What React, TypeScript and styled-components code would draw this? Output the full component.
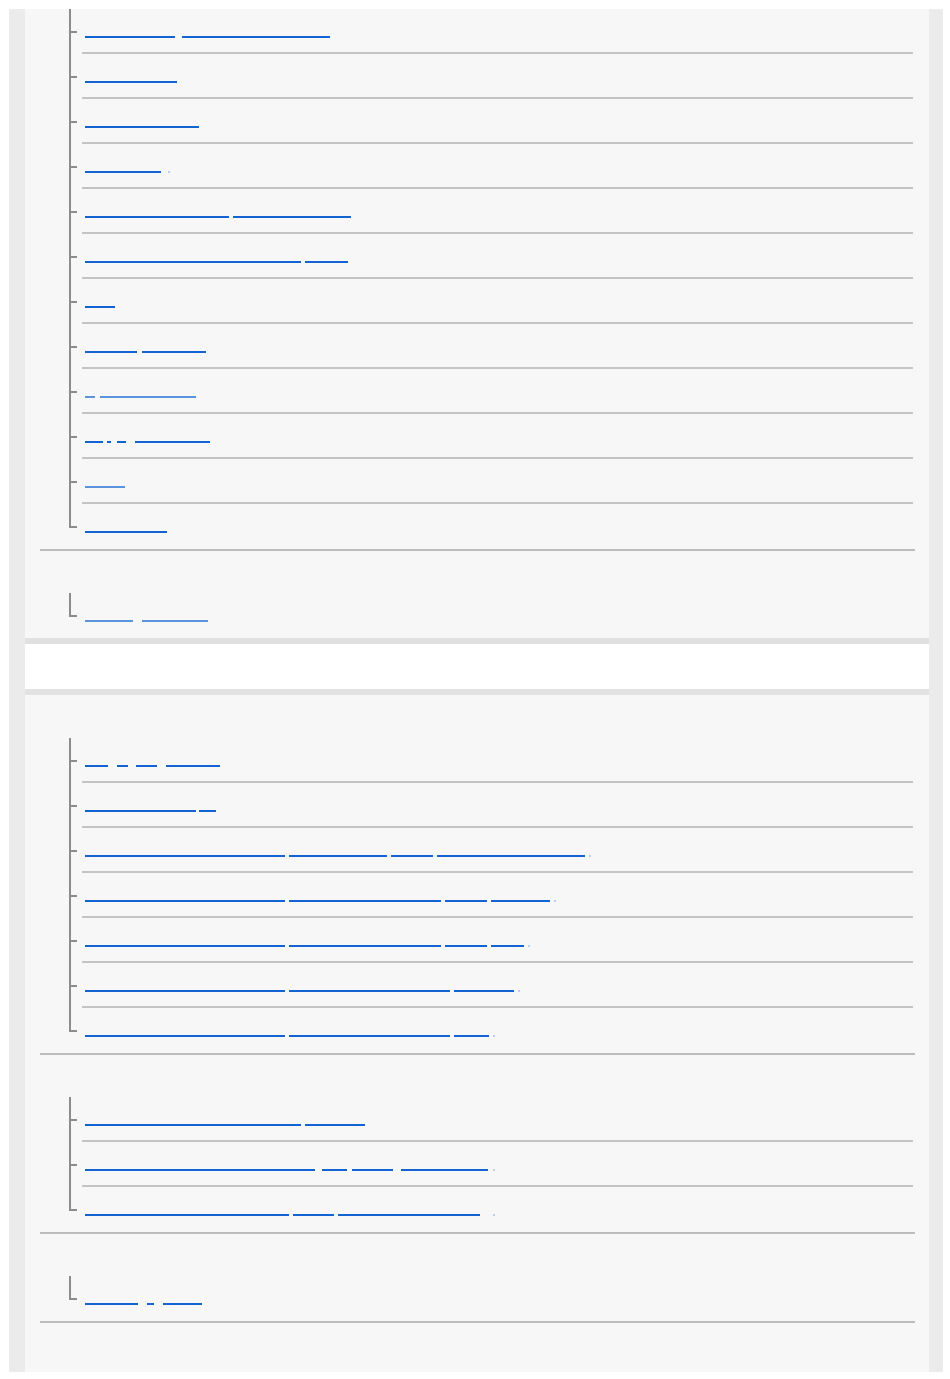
import styled, { createGlobalStyle } from "styled-components";

type Seg = [number, number];
type Row = { segs: Seg[]; dot?: number; light?: boolean };
type Group = { rows: Row[]; flush?: boolean; last?: boolean };

const LINK_X = 85;

const topPanel: Group[] = [
    {
        flush: true,
        rows: [
            { segs: [[85, 175], [182, 330]] },
            { segs: [[85, 177]] },
            { segs: [[85, 199]] },
            { segs: [[85, 161]], dot: 168 },
            { segs: [[85, 229], [233, 351]] },
            { segs: [[85, 301], [305, 348]] },
            { segs: [[85, 115]] },
            { segs: [[85, 137], [142, 206]] },
            { segs: [[85, 95], [100, 196]], light: true },
            { segs: [[85, 103], [107, 111], [117, 126], [135, 210]] },
            { segs: [[85, 125]], light: true },
            { segs: [[85, 167]] },
        ],
    },
    {
        last: true,
        rows: [{ segs: [[85, 133], [142, 208]], light: true }],
    },
];

const bottomPanel: Group[] = [
    {
        rows: [
            { segs: [[85, 108], [117, 128], [136, 157], [166, 220]] },
            { segs: [[85, 196], [199, 216]] },
            { segs: [[85, 285], [289, 387], [391, 433], [437, 585]], dot: 589 },
            { segs: [[85, 285], [289, 441], [445, 487], [491, 550]], dot: 554 },
            { segs: [[85, 285], [289, 441], [445, 487], [491, 524]], dot: 528 },
            { segs: [[85, 285], [289, 450], [454, 514]], dot: 518 },
            { segs: [[85, 285], [289, 450], [454, 489]], dot: 493 },
        ],
    },
    {
        rows: [
            { segs: [[85, 301], [305, 365]] },
            { segs: [[85, 315], [322, 347], [352, 393], [401, 488]], dot: 493 },
            { segs: [[85, 289], [293, 334], [338, 480]], dot: 493 },
        ],
    },
    {
        rows: [{ segs: [[85, 138], [147, 154], [163, 202]] }],
    },
];

const TreeRow = ({ row }: { row: Row }) => {
    let x = LINK_X;
    return (
        <Item>
            {row.segs.map(([a, b], i) => {
                const gap = a - x;
                x = b;
                return (
                    <LinkPart
                        key={i}
                        href="#"
                        $light={row.light}
                        style={{ width: b - a, marginLeft: gap }}
                    />
                );
            })}
            {row.dot && <Dot style={{ marginLeft: row.dot - x }} />}
        </Item>
    );
};

const Panel = ({ groups, top }: { groups: Group[]; top?: boolean }) => (
    <Sheet $top={top}>
        {groups.map((g, i) => (
            <Section key={i} $flush={g.flush} $last={g.last}>
                <Tree>
                    {g.rows.map((r, j) => (
                        <TreeRow key={j} row={r} />
                    ))}
                </Tree>
            </Section>
        ))}
    </Sheet>
);

const App = () => {
    return (
        <>
            <GlobalStyle />
            <Page>
                <Frame>
                    <Panel groups={topPanel} top />
                    <Divider />
                    <Panel groups={bottomPanel} />
                </Frame>
            </Page>
        </>
    );
};

export default App;

const GlobalStyle = createGlobalStyle`
    body {
        margin: 0;
        background: #ffffff;
        font-family: "Liberation Sans", Arial, sans-serif;
    }
`;

const Page = styled.div`
    padding: 9px 7px 7px 9px;
    height: 1379px;
    box-sizing: border-box;
    overflow: hidden;
`;

const Frame = styled.div`
    background: #ebebeb;
    padding: 0 14px 0 16px;
    height: 100%;
    display: flex;
    flex-direction: column;
`;

const Sheet = styled.div<{ $top?: boolean }>`
    background: #f7f7f7;
    padding-top: ${(p) => (p.$top ? 0 : 1)}px;
    flex: ${(p) => (p.$top ? "none" : 1)};
`;

const Divider = styled.div`
    height: 45px;
    flex: none;
    background: #ffffff;
    border-top: 6px solid #e0e0e0;
    border-bottom: 6px solid #e2e2e2;
`;

const Section = styled.div<{ $flush?: boolean; $last?: boolean }>`
    margin: 0 14px 0 15px;
    padding-top: ${(p) => (p.$flush ? 0 : 42)}px;
    border-bottom: ${(p) => (p.$last ? "none" : "2px solid #bdbdbd")};
`;

const Tree = styled.ul`
    list-style: none;
    margin: 0 2px 0 42px;
    padding: 0;
`;

const Item = styled.li`
    position: relative;
    height: 45px;
    box-sizing: border-box;
    display: flex;
    align-items: flex-start;
    padding: 11px 0 0 3px;
    border-bottom: 2px solid #c4c4c4;

    &::before {
        content: "";
        position: absolute;
        left: -13px;
        top: 0;
        bottom: -2px;
        width: 2px;
        background: #8c8c8c;
    }

    &::after {
        content: "";
        position: absolute;
        left: -11px;
        top: 22px;
        width: 6px;
        height: 2px;
        background: #8c8c8c;
    }

    &:last-child {
        border-bottom: none;
    }

    &:last-child::before {
        bottom: auto;
        height: 24px;
    }
`;

const LinkPart = styled.a<{ $light?: boolean }>`
    display: block;
    flex: none;
    height: 16px;
    border-bottom: 2px solid ${(p) => (p.$light ? "#5a94dc" : "#1463d2")};
    color: transparent;
    text-decoration: none;
`;

const Dot = styled.span`
    display: block;
    flex: none;
    width: 2px;
    height: 16px;
    border-bottom: 2px solid #b8cff0;
`;
